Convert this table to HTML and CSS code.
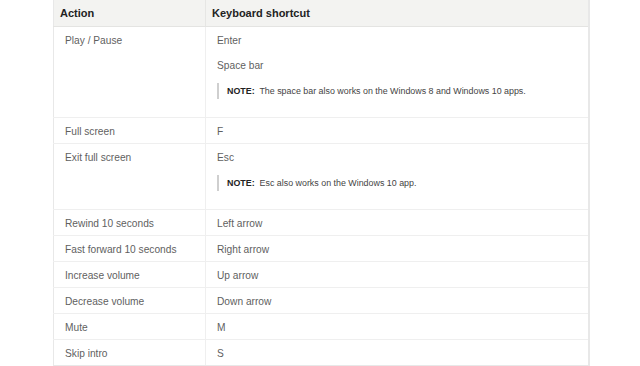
FILE: index.html
```html
<!DOCTYPE html>
<html>
<head>
<meta charset="utf-8">
<link rel="stylesheet" href="styles.css">
</head>
<body>
<div class="wrap">
<table class="shortcuts">
  <thead>
    <tr><th class="c1">Action</th><th class="c2">Keyboard shortcut</th></tr>
  </thead>
  <tbody>
    <tr><td>Play / Pause</td><td>
      <p class="line">Enter</p>
      <p class="line">Space bar</p>
      <div class="note"><b>NOTE:</b>&nbsp; The space bar also works on the Windows 8 and Windows 10 apps.</div>
    </td></tr>
    <tr><td>Full screen</td><td>F</td></tr>
    <tr><td>Exit full screen</td><td>
      <p class="line">Esc</p>
      <div class="note"><b>NOTE:</b>&nbsp; Esc also works on the Windows 10 app.</div>
    </td></tr>
    <tr><td>Rewind 10 seconds</td><td>Left arrow</td></tr>
    <tr><td>Fast forward 10 seconds</td><td>Right arrow</td></tr>
    <tr><td>Increase volume</td><td>Up arrow</td></tr>
    <tr><td>Decrease volume</td><td>Down arrow</td></tr>
    <tr><td>Mute</td><td>M</td></tr>
    <tr><td>Skip intro</td><td>S</td></tr>
  </tbody>
</table>
</div>
</body>
</html>
```
FILE: styles.css
```css
html, body { margin: 0; padding: 0; background: #fff; }
body { font-family: "Liberation Sans", Arial, sans-serif; }
.wrap { padding-left: 53px; }
.shortcuts {
  width: 537px;
  border-collapse: collapse;
  border-left: 1px solid #e8e8e8;
  border-right: 2px solid #e8e8e8;
  border-bottom: 2px solid #e8e8e8;
}
.shortcuts th {
  background: #f3f3f1;
  color: #222;
  font-weight: bold;
  font-size: 11px;
  text-align: left;
  height: 26px;
  padding: 0 6px;
  border-bottom: 1px solid #e4e4e2;
  box-sizing: border-box;
}
.shortcuts th.c1 { width: 152px; border-right: 1px solid #e6e6e4; }
.shortcuts td {
  vertical-align: top;
  font-size: 10.2px;
  line-height: 16px;
  color: #5f5f5f;
  padding: 6px 11px 3px;
  border-bottom: 1px solid #efefef;
}
.shortcuts td:first-child { border-right: 1px solid #efefef; }
.line { margin: 0 0 9px; }
.note {
  border-left: 2px solid #cfcfcf;
  padding-left: 8px;
  font-size: 8.9px;
  line-height: 16px;
  color: #444;
  margin-bottom: 15px;
}
.note b { color: #222; }
```
